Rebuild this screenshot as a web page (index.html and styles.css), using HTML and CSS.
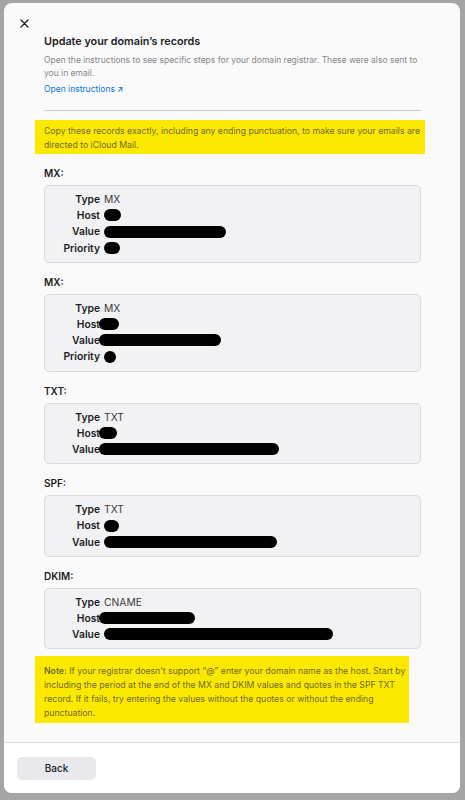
FILE: index.html
```html
<!DOCTYPE html>
<html lang="en">
<head>
    <meta charset="UTF-8">
    <meta name="viewport" content="width=device-width, initial-scale=1.0">
    <title>Update your domain's records</title>
    <link rel="stylesheet" href="styles.css">
</head>
<body>
    <div class="modal">
        <div class="modal-body">
            <button class="close-btn" aria-label="Close">
                <svg width="9" height="9" viewBox="0 0 9 9"><path d="M1 1L8 8M8 1L1 8" stroke="#1d1d1f" stroke-width="1.3" stroke-linecap="round"/></svg>
            </button>

            <div class="content">
                <h1>Update your domain’s records</h1>
                <p class="intro">Open the instructions to see specific steps for your domain registrar. These were also sent to you in email.</p>
                <a class="link" href="#">Open instructions <span class="arrow">↗</span></a>
                <hr class="divider">

                <p class="highlight notice">Copy these records exactly, including any ending punctuation, to make sure your emails are directed to iCloud Mail.</p>

                <div class="record">
                    <h2>MX:</h2>
                    <div class="record-box">
                        <span class="rec-label">Type</span><span class="rec-value">MX</span>
                        <span class="rec-label">Host</span><span class="rec-value"><i class="redact" style="width:17px"></i></span>
                        <span class="rec-label">Value</span><span class="rec-value"><i class="redact" style="width:122px"></i></span>
                        <span class="rec-label">Priority</span><span class="rec-value"><i class="redact" style="width:16px"></i></span>
                    </div>
                </div>

                <div class="record">
                    <h2>MX:</h2>
                    <div class="record-box">
                        <span class="rec-label">Type</span><span class="rec-value">MX</span>
                        <span class="rec-label">Host</span><span class="rec-value"><i class="redact shift" style="width:20px"></i></span>
                        <span class="rec-label">Value</span><span class="rec-value"><i class="redact shift" style="width:122px"></i></span>
                        <span class="rec-label">Priority</span><span class="rec-value"><i class="redact" style="width:12px"></i></span>
                    </div>
                </div>

                <div class="record">
                    <h2>TXT:</h2>
                    <div class="record-box">
                        <span class="rec-label">Type</span><span class="rec-value">TXT</span>
                        <span class="rec-label">Host</span><span class="rec-value"><i class="redact shift" style="width:18px"></i></span>
                        <span class="rec-label">Value</span><span class="rec-value"><i class="redact shift" style="width:180px"></i></span>
                    </div>
                </div>

                <div class="record">
                    <h2>SPF:</h2>
                    <div class="record-box">
                        <span class="rec-label">Type</span><span class="rec-value">TXT</span>
                        <span class="rec-label">Host</span><span class="rec-value"><i class="redact" style="width:15px"></i></span>
                        <span class="rec-label">Value</span><span class="rec-value"><i class="redact" style="width:173px"></i></span>
                    </div>
                </div>

                <div class="record">
                    <h2>DKIM:</h2>
                    <div class="record-box">
                        <span class="rec-label">Type</span><span class="rec-value">CNAME</span>
                        <span class="rec-label">Host</span><span class="rec-value"><i class="redact shift" style="width:96px"></i></span>
                        <span class="rec-label">Value</span><span class="rec-value"><i class="redact" style="width:229px"></i></span>
                    </div>
                </div>

                <p class="highlight note"><b>Note:</b> If your registrar doesn't support “@” enter your domain name as the host. Start by including the period at the end of the MX and DKIM values and quotes in the SPF TXT record. If it fails, try entering the values without the quotes or without the ending punctuation.</p>
            </div>
        </div>

        <div class="modal-footer">
            <button class="btn-back">Back</button>
        </div>
    </div>
</body>
</html>
```

FILE: styles.css
```css
html, body {
    margin: 0;
    height: 100%;
}

body {
    padding: 3px 5px 7px 4px;
    box-sizing: border-box;
    background: #a5a5a5;
    font-family: Inter, "Liberation Sans", Arial, sans-serif;
    color: #1d1d1f;
}

.modal {
    height: 790px;
    display: flex;
    flex-direction: column;
    background: #fafafa;
    border-radius: 8px;
    overflow: hidden;
}

.modal-body {
    flex: 1;
    position: relative;
    overflow: hidden;
}

.close-btn {
    position: absolute;
    top: 14px;
    left: 14px;
    width: 12px;
    height: 12px;
    padding: 0;
    border: none;
    background: none;
    display: flex;
    align-items: center;
    justify-content: center;
}

.content {
    margin: 0 39px 0 40px;
    padding-top: 32px;
}

h1 {
    margin: 0 0 5px 0;
    font-size: 10.8px;
    font-weight: 600;
    line-height: 14px;
}

.intro {
    margin: 0;
    font-size: 8.5px;
    line-height: 13px;
    color: #86868b;
}

.link {
    display: block;
    width: max-content;
    margin-top: 3px;
    font-size: 8.5px;
    line-height: 13px;
    color: #0a74db;
    text-decoration: none;
}

.arrow {
    font-size: 7.5px;
    font-weight: 600;
}

.divider {
    margin: 14px 0 0 0;
    border: none;
    border-top: 1px solid #cfcfd3;
}

.highlight {
    background: #fde800;
    color: #6f6b2a;
    font-size: 8.7px;
    line-height: 14px;
}

.notice {
    margin: 9px -4px 0 -9px;
    padding: 4px 4px 2px 9px;
}

.record {
    margin-top: 13px;
}

h2 {
    margin: 0 0 6px 0;
    font-size: 10px;
    font-weight: 600;
    line-height: 12px;
}

.record-box {
    display: grid;
    grid-template-columns: 55px 1fr;
    column-gap: 4px;
    padding: 5px 0 6px 0;
    background: #f2f2f5;
    border: 1px solid #d9d9de;
    border-radius: 5px;
    font-size: 10.3px;
    line-height: 16.2px;
}

.rec-label {
    text-align: right;
    font-weight: 600;
}

.rec-value {
    display: flex;
    align-items: center;
    color: #3a3a3c;
}

.redact {
    display: block;
    height: 12px;
    background: #000;
    border-radius: 7px;
}

.redact.shift {
    margin-left: -5px;
}

.note {
    margin: 7px 12px 0 -9px;
    padding: 8px 3px 3px 9px;
}

.note b {
    font-weight: 600;
}

.modal-footer {
    height: 51px;
    background: #fff;
    border-top: 1px solid #dcdce0;
    padding: 13px 0 0 13px;
    box-sizing: border-box;
}

.btn-back {
    width: 79px;
    height: 23px;
    border: none;
    border-radius: 5px;
    background: #e8e8ed;
    font-family: Inter, "Liberation Sans", Arial, sans-serif;
    font-size: 10px;
    font-weight: 500;
    color: #1d1d1f;
}
```
